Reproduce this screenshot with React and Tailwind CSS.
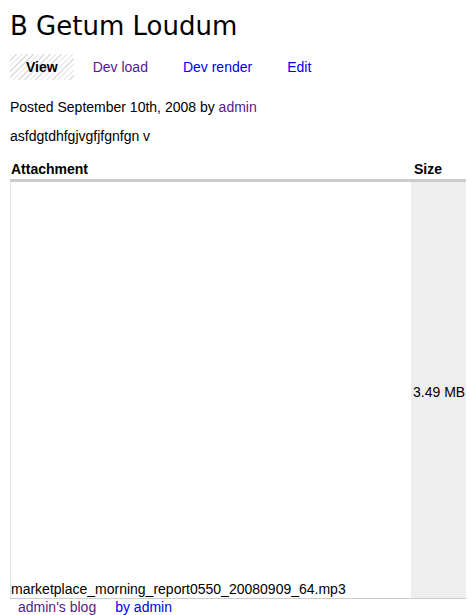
import React from "react";

const tabs = [
  { label: "View", active: true },
  { label: "Dev load", visited: true },
  { label: "Dev render" },
  { label: "Edit" },
];

const App = () => {
  return (
    <div className="min-h-[615px] bg-white text-black text-[14px] leading-4 font-['Liberation_Sans',Arial,sans-serif]">
      {/* Title */}
      <h1 className="pl-[10px] pt-[11px] text-[26px] leading-[30px] font-normal font-['DejaVu_Sans',Verdana,sans-serif]">
        B Getum Loudum
      </h1>

      {/* Tabs */}
      <ul className="mt-[13px] ml-[10px] flex gap-[3px]">
        {tabs.map((tab) => (
          <li
            key={tab.label}
            className={`h-[26px] px-4 flex items-center ${
              tab.active
                ? "font-bold bg-[repeating-linear-gradient(135deg,#dedede_0px,#dedede_1px,#ffffff_1px,#ffffff_4px)]"
                : tab.visited
                ? "text-[#551a8b]"
                : "text-[#0000ee]"
            }`}
          >
            {tab.label}
          </li>
        ))}
      </ul>

      {/* Post info */}
      <p className="mt-[19px] ml-[10px]">
        Posted September 10th, 2008 by <span className="text-[#551a8b]">admin</span>
      </p>
      <p className="mt-[13px] ml-[10px]">asfdgtdhfgjvgfjfgnfgn v</p>

      {/* Attachments */}
      <div className="mt-[17px] ml-[10px] w-[456px]">
        <div className="flex font-bold border-b-[3px] border-[#cccccc] pb-[2px]">
          <div className="flex-1 pl-[1px]">Attachment</div>
          <div className="w-[55px] pl-[3px]">Size</div>
        </div>
        <div className="flex h-[417px] border-b border-[#cccccc]">
          <div className="flex-1 flex flex-col justify-end border-l border-[#e4e4e4] pb-[1px]">
            marketplace_morning_report0550_20080909_64.mp3
          </div>
          <div className="w-[55px] bg-[#eeeeee] flex items-center pl-[2px] pt-[4px]">3.49 MB</div>
        </div>
      </div>

      {/* Links */}
      <div className="pl-[18px] flex gap-[19px]">
        <span className="text-[#551a8b]">admin's blog</span>
        <span className="text-[#0000ee]">by admin</span>
      </div>
    </div>
  );
};

export default App;
